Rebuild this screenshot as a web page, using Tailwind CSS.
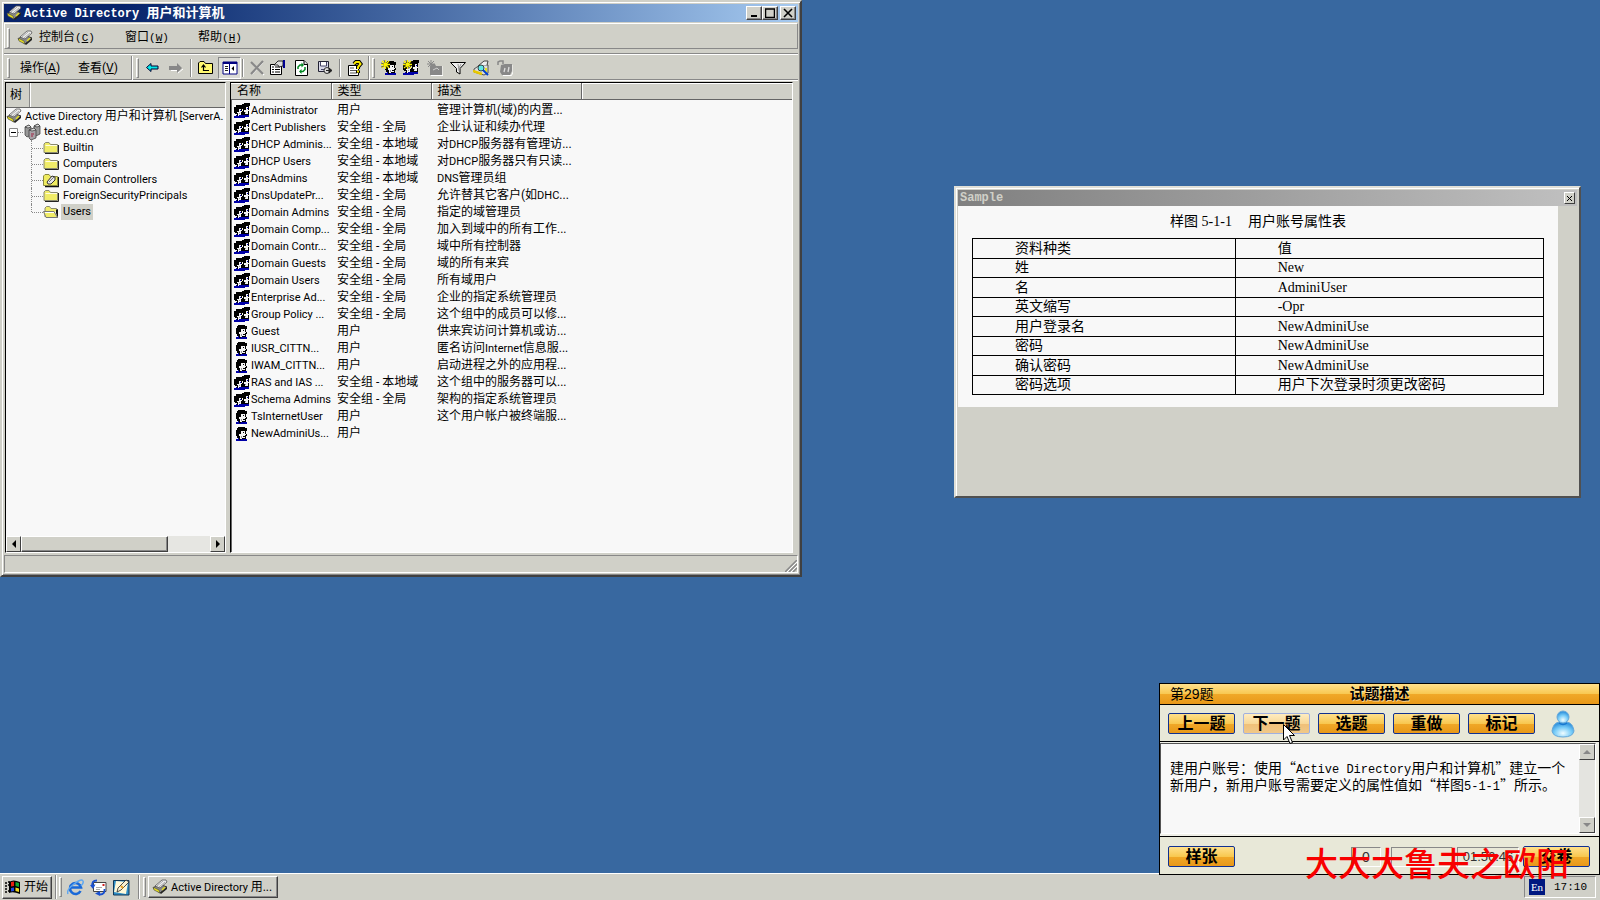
<!DOCTYPE html>
<html lang="zh-CN">
<head>
<meta charset="utf-8">
<title>Active Directory 用户和计算机</title>
<script src="https://cdn.jsdelivr.net/npm/@tailwindcss/browser@4"></script>
</head>
<body class="relative min-h-screen overflow-hidden bg-[#3868a0] font-['Roboto','Noto_Sans_CJK_SC',sans-serif] text-xs text-black">

<svg class="hidden" aria-hidden="true">
  <symbol id="mmc" viewBox="0 0 16 16">
    <path d="M1 9 7 5 15 8 8 14Z" fill="#888" stroke="#333"/><path d="M1 8 7 11 8 14 2 11Z" fill="#e8e020" stroke="#444" stroke-width=".6"/>
    <path d="M8 14 15 8V10L9 15Z" fill="#222"/><path d="M3 7 10 1 14 1 15 3 8 9Z" fill="#eee" stroke="#555" stroke-width=".8"/><path d="M5 7 11 2M7 8 13 3" stroke="#999" stroke-width=".8"/><path d="M10 11 13 8" stroke="#e8e020" stroke-width="1.5"/>
  </symbol>
  <symbol id="user" viewBox="0 0 16 16">
    <g shape-rendering="crispEdges">
    <path d="M2 15V13H4V12H12V13H13V15Z" fill="#0000a8"/>
    <path d="M4 1H11V2H13V5H12V8H13V10H12V13H7V14H5V12H3V10H2V4H3V2H4Z"/>
    <path d="M7 5H11V8H12V9H11V12H8V13H6V10H5V8H7Z" fill="#f4f4f4"/>
    <path d="M9 6h1v1h-1ZM9 10h2v1h-2Z"/><path d="M7 10h1v2h-1Z" fill="#999"/>
    </g>
  </symbol>
  <symbol id="group" viewBox="0 0 16 16">
    <g shape-rendering="crispEdges">
    <path d="M0 15V13H2V12H15V14H11V15Z" fill="#0000a8"/>
    <path d="M8 1H10V0H16V3H15V12H9V3H8Z"/>
    <path d="M12 4H14V7H15V8H14V11H11V9H10V7H12Z" fill="#f4f4f4"/>
    <path d="M2 2H8V3H9V6H8V8H9V12H5V13H3V11H1V10H0V4H2Z"/>
    <path d="M5 6H7V8H8V9H7V12H5V13H4V10H3V9H5Z" fill="#f4f4f4"/>
    <path d="M6 7h1v1H6ZM13 5h1v1h-1Z" fill="#0000c0"/><path d="M11 9h1v1h-1ZM5 10h1v1H5Z" fill="#999"/>
    </g>
  </symbol>
  <symbol id="folder" viewBox="0 0 16 16">
    <path d="M2 13.500H15.500V5" stroke="#222" fill="none"/><path d="M1 12.500V4L2.500 2.500H6L7.500 4.500H14.500V12.500Z" fill="#f0ec68" stroke="#8a8a70"/><path d="M2.500 5.500H14" stroke="#fffde0"/>
  </symbol>
  <symbol id="folderopen" viewBox="0 0 16 16">
    <path d="M2 13V4L3.500 2.500H6.500L8 4.500H13.500V7" fill="#f0ec68" stroke="#8a8a70"/><path d="M3 13.500 0.500 7.500H11L14.500 13.500Z" fill="#f0ec68" stroke="#777"/><path d="M13 6V9L15 14V5Z" fill="#111"/><path d="M2 8.500h9" stroke="#fff"/>
  </symbol>
  <symbol id="ou" viewBox="0 0 16 16">
    <path d="M2 14.500H15.500V5" stroke="#111" stroke-width="1.500" fill="none"/><path d="M.5 13.500V4L2 2.500H6L7.500 4.500H14.500V13.500Z" fill="#f0ec60" stroke="#8a8a40"/><path d="M4 10 9 4 12 5 12 8 8 12 5 12Z" fill="#e8e8e8" stroke="#333"/><path d="M6 10 11 5" stroke="#777"/>
  </symbol>
  <symbol id="domain" viewBox="0 0 18 18">
    <g stroke="#333" stroke-width=".7"><path d="M2 4 6 2 8 4V12L4 14 2 12Z" fill="#999"/><path d="M11 3 15 1 17 3V11L13 13 11 11Z" fill="#999"/><path d="M6 7 11 5 13 7V15L8 17 6 15Z" fill="#a8a4a8"/><path d="M2 4 6 2 8 4 5 5ZM11 3 15 1 17 3 14 4ZM6 7 11 5 13 7 9 8Z" fill="#ddd"/></g><path d="M8 11h3M8 13h2" stroke="#a02040"/>
  </symbol>
  <symbol id="spark" viewBox="0 0 16 16"><path d="M4.500 0V9M0 4.500H9M1 1 8 8M8 1 1 8" stroke="#f8f000" stroke-width="1.300"/><path d="M3 0 4 3M0 3 3 4M0 7 3 6M6 9 5 6" stroke="#222" stroke-width=".6"/></symbol>
</svg>

<main>
<!-- Directory console window -->
<section class="absolute left-0 top-0 flex h-[577px] w-[802px] flex-col border-2 border-t-[#d0d0c8] border-l-[#d0d0c8] border-r-[#404040] border-b-[#404040] bg-[#d0d0c8] p-0.5 shadow-[inset_1px_1px_0_#fff,inset_-1px_-1px_0_#888]">
  <header class="flex h-[18px] shrink-0 items-center bg-gradient-to-r from-[#08246b] from-15% to-[#a6caf0] pl-0.5 pr-0.5 text-white">
    <svg class="size-4"><use href="#mmc"/></svg>
    <h1 class="ml-0.5 flex-1 whitespace-pre pt-0.5 font-['Liberation_Mono','Noto_Sans_CJK_SC',monospace] text-xs font-bold">Active Directory <span class="text-[13px]">用户和计算机</span></h1>
    <button aria-label="最小化" class="flex h-3.5 w-4 items-center justify-center border border-t-white border-l-white border-r-[#404040] border-b-[#404040] bg-[#d0d0c8] shadow-[inset_-1px_-1px_0_#888]"><svg class="size-2.5" viewBox="0 0 10 10"><path d="M2 8H8" stroke="#000" stroke-width="2"/></svg></button>
    <button aria-label="最大化" class="flex h-3.5 w-4 items-center justify-center border border-t-white border-l-white border-r-[#404040] border-b-[#404040] bg-[#d0d0c8] shadow-[inset_-1px_-1px_0_#888]"><svg class="size-2.5" viewBox="0 0 10 10"><path d="M.5 1V9.500H9.500V1M0 1H10" stroke="#000" stroke-width="1.500" fill="none"/></svg></button>
    <button aria-label="关闭" class="ml-0.5 flex h-3.5 w-4 items-center justify-center border border-t-white border-l-white border-r-[#404040] border-b-[#404040] bg-[#d0d0c8] shadow-[inset_-1px_-1px_0_#888]"><svg class="size-2.5" viewBox="0 0 10 10"><path d="M1 1 9 9M9 1 1 9" stroke="#000" stroke-width="1.600"/></svg></button>
  </header>

  <nav class="mt-px flex h-[26px] shrink-0 items-center border border-t-white border-l-white border-r-[#888] border-b-[#888] pl-0.5 pt-[3px] font-['Liberation_Mono','Noto_Sans_CJK_SC',monospace]">
    <span class="h-5 w-[3px] border border-t-white border-l-white border-r-[#888] border-b-[#888]"></span>
    <svg class="ml-[7px] size-4"><use href="#mmc"/></svg>
    <button class="ml-1.5 w-[86px] text-left">控制台<span class="text-[11px]">(<u>C</u>)</span></button>
    <button class="w-[73px] text-left">窗口<span class="text-[11px]">(<u>W</u>)</span></button>
    <button class="text-left">帮助<span class="text-[11px]">(<u>H</u>)</span></button>
  </nav>

  <div class="mt-1 flex h-[27px] shrink-0 items-center border-t border-b border-t-[#888] border-b-[#888] pl-[3px] pt-[3px] shadow-[inset_0_1px_0_#fff,0_1px_0_#fff]">
    <span class="h-5 w-[3px] border border-t-white border-l-white border-r-[#888] border-b-[#888]"></span>
    <button class="ml-2.5 w-[58px] text-left">操作(<u>A</u>)</button>
    <button class="w-[53px] text-left">查看(<u>V</u>)</button>
    <span class="h-6 w-0.5 border-l border-r border-l-[#888] border-r-white"></span>
    <span class="ml-[3px] h-5 w-[3px] border border-t-white border-l-white border-r-[#888] border-b-[#888]"></span>
    <button aria-label="后退" class="ml-1.5"><svg class="size-4" viewBox="0 0 16 16"><path d="M1.500 7.500 6 3.500V6H13V9H6V11.500Z" fill="#00e8e8" stroke="#003"/></svg></button>
    <button aria-label="前进" class="ml-[7px]"><svg class="size-4" viewBox="0 0 16 16"><path d="M15 9 10 13V10.500H3" stroke="#fff" fill="none"/><path d="M14 8 9 3V6H1V10H9V13Z" fill="#888"/></svg></button>
    <span class="ml-1.5 h-[18px] w-0.5 border-l border-r border-l-[#888] border-r-white"></span>
    <button aria-label="上一级" class="ml-1.5"><svg class="size-4" viewBox="0 0 16 16"><path d="M.5 13.500V3L2 1.500H6L7.500 3.500H14.500V13.500Z" fill="#fff870" stroke="#000"/><path d="M5.500 5V10.500H11M3.500 7.500 5.500 5 7.500 7.500" stroke="#000" fill="none" stroke-width="1.200"/></svg></button>
    <button aria-label="显示树" aria-pressed="true" class="ml-1 flex h-[22px] w-[23px] items-center justify-center border border-t-[#888] border-l-[#888] border-r-white border-b-white bg-[#dcdcd6]"><svg class="size-4" viewBox="0 0 16 16"><path d="M1 2H15V14H1Z" fill="#fff" stroke="#000080"/><path d="M1 3H15" stroke="#000080" stroke-width="2"/><path d="M7.500 3V14" stroke="#000080"/><path d="M3 6.500h3M3 8.500h3M3 10.500h3" stroke="#222"/><path d="M12 6V11L9.500 8.500Z"/></svg></button>
    <span class="ml-px h-[18px] w-0.5 border-l border-r border-l-[#888] border-r-white"></span>
    <button aria-label="删除" class="ml-[5px]"><svg class="size-4" viewBox="0 0 16 16"><path d="M3 3 15 15M14 2 3 14" stroke="#fff" stroke-width="1.500"/><path d="M2 2 14 14M14 1 2 14" stroke="#888" stroke-width="2.200"/></svg></button>
    <button aria-label="属性" class="ml-[5px]"><svg class="size-4" viewBox="0 0 16 16"><path d="M.5 4.500H11.500V14.500H.5Z" fill="#fff" stroke="#000"/><path d="M2 7h2M5 7h5M2 9.500h2M5 9.500h5M2 12h2M5 12h5" stroke="#000"/><path d="M4 5 8 1H13V6L9 7 8 5Z" fill="#ddd" stroke="#000" stroke-width=".8"/><path d="M13 0h2v8h-2Z" fill="#000090"/></svg></button>
    <button aria-label="刷新" class="ml-2"><svg class="size-4" viewBox="0 0 16 16"><path d="M1.500 .5H10L13.500 4V15.500H1.500Z" fill="#fff" stroke="#000"/><path d="M10 .5V4.500H13.500" fill="#ddd" stroke="#000"/><path d="M4 9V7L6 5H8M11 7V9.500L9 11.500H7" fill="none" stroke="#008820" stroke-width="1.500"/><path d="M7.500 2.500V7.500L10 5ZM7.500 9V14L5 11.500Z" fill="#008820"/></svg></button>
    <button aria-label="导出列表" class="ml-[7px]"><svg class="size-4" viewBox="0 0 16 16"><path d="M1.500 1.500H11.500V11.500H1.500Z" fill="#d8d8e8" stroke="#223"/><path d="M3.500 2V6H9.500V2M4 9.500H8" stroke="#446" fill="#fff"/><circle cx="10" cy="10.500" r="3" fill="#ddd" stroke="#333"/><path d="M9 10.500H13M12 8 15 10.500 12 13Z" fill="#222" stroke="#222"/></svg></button>
    <span class="ml-1.5 h-[18px] w-0.5 border-l border-r border-l-[#888] border-r-white"></span>
    <button aria-label="帮助" class="ml-[7px]"><svg class="size-4" viewBox="0 0 16 16"><path d="M.5 5.500H10.500V15.500H.5Z" fill="#fff" stroke="#000"/><path d="M2 8h4M2 10.500h7M2 13h7" stroke="#555"/><path d="M6 4 8 2H11L12.500 4 10 7V9M10 10.500V13" fill="none" stroke="#000" stroke-width="4"/><path d="M6 4 8 2H11L12.500 4 10 7V9M10 10.500V12.500" fill="none" stroke="#f8e800" stroke-width="2"/></svg></button>
    <span class="ml-1 h-6 w-0.5 border-l border-r border-l-[#888] border-r-white"></span>
    <span class="ml-0.5 h-5 w-[3px] border border-t-white border-l-white border-r-[#888] border-b-[#888]"></span>
    <button aria-label="新建用户" class="ml-1.5"><svg class="size-4" viewBox="0 0 16 16"><use href="#user" x="2" width="16" height="16"/><use href="#spark"/></svg></button>
    <button aria-label="新建组" class="ml-1.5"><svg class="size-4" viewBox="0 0 16 16"><use href="#group"/><use href="#spark"/></svg></button>
    <button aria-label="新建组织单位" class="ml-2"><svg class="size-4" viewBox="0 0 16 16"><path d="M4 15.500H16V6" stroke="#fff" fill="none"/><path d="M3 15V6L5 4H8L9 6H15V15Z" fill="#888"/><path d="M4 0V8M0 4H8M1 1 7 7M7 1 1 7" stroke="#888"/><path d="M6 10 10 8 12 10" stroke="#ccc" fill="none"/></svg></button>
    <button aria-label="筛选" class="ml-[7px]"><svg class="size-4" viewBox="0 0 16 16"><path d="M.5 2.500H15.500L10 8.500V14L6.500 12V8.500Z" fill="#eee" stroke="#000"/><path d="M8 4 9 11M11 4 9 8" stroke="#999"/></svg></button>
    <button aria-label="查找" class="ml-[7px]"><svg class="size-4" viewBox="0 0 16 16"><path d="M1 9 7 5H15V13L11 15 1 12Z" fill="#ddd" stroke="#333" stroke-width=".8"/><path d="M0 11 9 14" stroke="#e8c800" stroke-width="2.500"/><path d="M5 6 11 1H15L14 5" fill="#eee" stroke="#444"/><path d="M13 8V12" stroke="#e8e020" stroke-width="2"/><circle cx="8" cy="8" r="3" fill="#60e8e8" stroke="#222" stroke-width=".8"/><path d="M10 10 15 15" stroke="#0040d0" stroke-width="2"/></svg></button>
    <button aria-label="添加到组" class="ml-2"><svg class="size-4" viewBox="0 0 16 16"><path d="M6 15.500H14.500L16 12V5" stroke="#fff" fill="none"/><path d="M1 5V2L3 1H6V4" stroke="#888" stroke-width="1.500" fill="none"/><path d="M4 5 8 4H15V11L13 15H5L3 12Z" fill="#888"/><path d="M8 8 7 12M12 7 11 12" stroke="#ddd" stroke-width="1.300"/></svg></button>
  </div>

  <div class="mt-0.5 flex min-h-0 flex-1 gap-1 pl-px pr-[5px]">
    <!-- Console tree -->
    <div class="flex w-[221px] flex-col border border-t-black border-l-black border-r-white border-b-white bg-[#f8f8f8]">
      <div class="flex h-[25px] shrink-0 border-b border-b-[#666] bg-[#d0d0c8]"><span class="flex w-6 items-center border-r border-r-[#888] pl-1 shadow-[1px_0_0_#fff]">树</span></div>
      <ul class="flex-1 whitespace-nowrap text-[11px] leading-4">
        <li>
          <div class="flex h-4 items-center gap-[3px]"><svg class="size-4 shrink-0"><use href="#mmc"/></svg><span>Active Directory <span class="text-xs">用户和计算机</span> [ServerA.</span></div>
          <ul>
            <li>
              <div class="flex h-4 items-center pl-[3px]"><button aria-label="折叠" class="shrink-0"><svg class="block size-[9px]" viewBox="0 0 9 9"><path d="M.5 .5H8.500V8.500H.5Z" fill="#fff" stroke="#888"/><path d="M2 4.500H7" stroke="#000"/></svg></button><span class="w-[5px] border-t border-dotted border-[#888]"></span><svg class="size-[18px] shrink-0"><use href="#domain"/></svg><span class="ml-[3px]">test.edu.cn</span></div>
              <ul id="containers" class="ml-[25px]"></ul>
            </li>
          </ul>
        </li>
      </ul>
      <div class="flex h-4 shrink-0 bg-[#e6e6e2]">
        <button aria-label="向左滚动" class="flex w-[15px] items-center justify-center border border-t-white border-l-white border-r-[#404040] border-b-[#404040] bg-[#d0d0c8]"><svg class="size-2" viewBox="0 0 8 8"><path d="M6 0V8L2 4Z"/></svg></button>
        <span class="w-[147px] border border-t-white border-l-white border-r-[#404040] border-b-[#404040] bg-[#d0d0c8] shadow-[inset_-1px_-1px_0_#888]"></span>
        <button aria-label="向右滚动" class="ml-auto flex w-[15px] items-center justify-center border border-t-white border-l-white border-r-[#404040] border-b-[#404040] bg-[#d0d0c8]"><svg class="size-2" viewBox="0 0 8 8"><path d="M2 0V8L6 4Z"/></svg></button>
      </div>
    </div>
    <!-- Object list -->
    <div class="min-w-0 flex-1 border border-t-black border-l-black border-r-white border-b-white bg-[#f8f8f8] shadow-[inset_1px_0_0_#666]">
      <table class="w-full table-fixed border-collapse text-left">
        <thead class="h-4 leading-4">
          <tr class="h-4">
            <th class="w-[100px] border-b border-r border-[#666] bg-[#d0d0c8] p-0 pl-1.5 font-normal shadow-[inset_0_1px_0_#fff]">名称</th>
            <th class="w-[100px] border-b border-r border-[#666] bg-[#d0d0c8] p-0 pl-1.5 font-normal shadow-[inset_1px_1px_0_#fff]">类型</th>
            <th class="w-[150px] border-b border-r border-[#666] bg-[#d0d0c8] p-0 pl-1.5 font-normal shadow-[inset_1px_1px_0_#fff]">描述</th>
            <th class="border-b border-[#666] bg-[#d0d0c8] p-0 shadow-[inset_1px_1px_0_#fff]"></th>
          </tr>
        </thead>
        <tbody id="objects" class="leading-[17px] before:block before:h-0.5"></tbody>
      </table>
    </div>
  </div>

  <footer class="mt-0.5 flex h-[18px] shrink-0 items-end justify-end border border-t-[#888] border-l-[#888] border-r-white border-b-white">
    <svg class="size-3" viewBox="0 0 12 12"><path d="M0 12 12 0M4 12 12 4M8 12 12 8" stroke="#888" stroke-width="1.500"/><path d="M2 12 12 2M6 12 12 6" stroke="#fff"/></svg>
  </footer>
</section>

<!-- Sample window -->
<section class="absolute left-[954px] top-[186px] h-[312px] w-[627px] border-2 border-t-[#e0e0d8] border-l-[#e0e0d8] border-r-[#505050] border-b-[#505050] bg-[#d0d0c8] p-0.5 shadow-[inset_1px_1px_0_#fff]">
  <header class="flex h-4 items-center justify-between bg-gradient-to-r from-[#808080] to-[#c0c0c0] pr-0.5">
    <h2 class="pl-0.5 font-['Liberation_Mono',monospace] text-xs font-bold text-[#d0d0c8]">Sample</h2>
    <button aria-label="关闭" class="flex h-3 w-[11px] items-center justify-center border border-t-white border-l-white border-r-[#404040] border-b-[#404040] bg-[#d0d0c8]"><svg class="size-[7px]" viewBox="0 0 7 7"><path d="M1 1 6 6M6 1 1 6" stroke="#000"/></svg></button>
  </header>
  <div class="mr-[19px] bg-[#f8f8f8] px-3.5 pb-3 font-['Liberation_Serif','Noto_Sans_CJK_SC',serif] text-sm">
    <table class="w-full table-fixed border-collapse">
      <caption class="h-8 text-center leading-8">样图 5-1-1<span class="ml-4">用户账号属性表</span></caption>
      <thead><tr class="leading-[19px]"><th class="w-[46%] border border-black p-0 pl-[42px] text-left font-normal">资料种类</th><th class="border border-black p-0 pl-[42px] text-left font-normal">值</th></tr></thead>
      <tbody id="attributes"></tbody>
    </table>
  </div>
</section>

<!-- Question panel -->
<section class="absolute bottom-[25px] right-0 z-10 flex h-[192px] w-[441px] flex-col border border-black bg-[#e8e8d8] font-['Liberation_Sans','Noto_Sans_CJK_SC',sans-serif] text-sm">
  <header class="relative flex h-[21px] shrink-0 items-center justify-center border-b border-black bg-[linear-gradient(#ffe08c_0%,#f8c850_50%,#f0a828_52%,#e89818_100%)] leading-5">
    <span class="absolute left-2.5">第29题</span>
    <h2 class="text-[15px] font-bold [text-shadow:1px_1px_0_#fff8]">试题描述</h2>
  </header>
  <div class="flex h-[37px] shrink-0 items-center gap-2 border-b border-black pl-2 pt-px text-base font-bold">
    <button class="h-[21px] w-[67px] rounded-xs border border-[#103090] bg-[linear-gradient(#ffe08c_0%,#f8c850_50%,#f0a828_52%,#e89818_100%)] leading-[18px]">上一题</button>
    <button class="h-[21px] w-[67px] rounded-xs border border-[#a0b0e0] bg-[linear-gradient(#ffecc0_0%,#f8d898_50%,#f0c078_52%,#f0c888_100%)] leading-[18px]">下一题</button>
    <button class="h-[21px] w-[67px] rounded-xs border border-[#103090] bg-[linear-gradient(#ffe08c_0%,#f8c850_50%,#f0a828_52%,#e89818_100%)] leading-[18px]">选题</button>
    <button class="h-[21px] w-[67px] rounded-xs border border-[#103090] bg-[linear-gradient(#ffe08c_0%,#f8c850_50%,#f0a828_52%,#e89818_100%)] leading-[18px]">重做</button>
    <button class="h-[21px] w-[67px] rounded-xs border border-[#103090] bg-[linear-gradient(#ffe08c_0%,#f8c850_50%,#f0a828_52%,#e89818_100%)] leading-[18px]">标记</button>
    <svg class="ml-2 h-7 w-6" viewBox="0 0 24 28"><defs><radialGradient id="glass" cx=".5" cy=".75" r=".65"><stop offset="0" stop-color="#f0fcff"/><stop offset=".6" stop-color="#78ccf8"/><stop offset="1" stop-color="#3898e0"/></radialGradient></defs><path d="M1 21Q2 13 8 12H16Q22 13 23 21Q22 27 12 27Q2 27 1 21Z" fill="url(#glass)" stroke="#68a8d8"/><circle cx="12" cy="7" r="6" fill="url(#glass)" stroke="#68a8d8"/><path d="M8 13Q12 16 16 13" stroke="#1878d0" fill="none" stroke-width="1.500"/></svg>
  </div>
  <div class="flex min-h-0 flex-1 border-b border-black bg-[#f0f0e8] pb-0.5 pt-px pr-[3px]">
    <div class="flex flex-1 border border-t-[#555] border-l-[#555] border-r-white border-b-white bg-[#f8f8f8]">
      <p class="flex-1 whitespace-nowrap pl-[9px] pt-[15px] font-['Noto_Sans_CJK_SC',sans-serif] leading-4">建用户账号：使用“<span class="font-['Liberation_Mono',monospace] text-xs leading-none">Active Directory</span>用户和计算机”建立一个<br>新用户，新用户账号需要定义的属性值如“样图<span class="font-['Liberation_Mono',monospace] text-xs leading-none">5-1-1</span>”所示。</p>
      <div class="flex w-4 flex-col justify-between bg-[#e4e4e0]">
        <button aria-label="向上滚动" class="flex h-4 items-center justify-center border border-t-white border-l-white border-r-[#404040] border-b-[#404040] bg-[#d0d0c8]"><svg class="size-2" viewBox="0 0 8 8"><path d="M0 6H8L4 2Z" fill="#888"/></svg></button>
        <button aria-label="向下滚动" class="flex h-4 items-center justify-center border border-t-white border-l-white border-r-[#404040] border-b-[#404040] bg-[#d0d0c8]"><svg class="size-2" viewBox="0 0 8 8"><path d="M0 2H8L4 6Z" fill="#888"/></svg></button>
      </div>
    </div>
  </div>
  <div class="flex h-[37px] shrink-0 items-center pl-2 pr-[9px] pt-0.5">
    <button class="h-[21px] w-[67px] rounded-xs border border-[#103090] bg-[linear-gradient(#ffe08c_0%,#f8c850_50%,#f0a828_52%,#e89818_100%)] text-base font-bold leading-[18px]">样张</button>
    <span class="ml-auto h-5 w-[30px] border border-t-[#888] border-l-[#888] border-r-white border-b-white text-center leading-[18px] text-[#333]">0</span>
    <span class="ml-2.5 h-5 w-[62px] border border-t-[#888] border-l-[#888] border-r-white border-b-white"></span>
    <span class="ml-1 mr-1 h-5 w-[62px] border border-t-[#888] border-l-[#888] border-r-white border-b-white text-center text-[13px] leading-[18px] text-[#333]">01:56:46</span>
    <button class="h-[21px] w-[67px] rounded-xs border border-[#103090] bg-[linear-gradient(#ffe08c_0%,#f8c850_50%,#f0a828_52%,#e89818_100%)] text-base font-bold leading-[18px]">交卷</button>
  </div>
</section>
</main>

<p class="absolute bottom-[22px] right-[31px] z-20 font-['Noto_Sans_CJK_SC',serif] text-[33px] font-medium leading-8 text-[#f80000]">大大大鲁夫之欧阳</p>
<svg class="absolute left-[1283px] top-[724px] z-20 h-5 w-3" viewBox="0 0 12 20"><path d="M.5 .5V16L4 12.500 7 19.500 9.500 18.500 6.500 11.500H11.500Z" fill="#fff" stroke="#000"/></svg>

<!-- Taskbar -->
<footer class="absolute inset-x-0 bottom-0 flex h-[27px] items-center border-t border-white bg-[#d0d0c8] pl-0.5 pr-1">
  <button class="flex h-[23px] w-[50px] items-center border border-t-white border-l-white border-r-[#404040] border-b-[#404040] pl-0.5 shadow-[inset_-1px_-1px_0_#888]"><svg class="size-4" viewBox="0 0 16 16"><path d="M0 4h2M0 7h2M0 10h2M0 13h2M3 3h2M3 6h2M3 12h2" stroke="#000" stroke-width="1.500"/><path d="M4 3Q8 0 15 3V15Q8 12 4 14Z"/><path d="M6 3 9 2.500V7L6 7.500Z" fill="#e82010"/><path d="M10.500 3 14 4V8L10.500 7Z" fill="#10a830"/><path d="M6 9 9 8.500V12L6 12.500Z" fill="#2048e0"/><path d="M10.500 8.500 14 9.500V13L10.500 12Z" fill="#f0d820"/></svg><span class="ml-[3px] text-xs">开始</span></button>
  <span class="ml-[3px] h-6 w-0.5 border-l border-r border-l-[#888] border-r-white"></span>
  <span class="ml-0.5 h-5 w-[3px] border border-t-white border-l-white border-r-[#888] border-b-[#888]"></span>
  <a href="#ie" aria-label="Internet Explorer" class="ml-[5px]"><svg class="size-[17px]" viewBox="0 0 17 17"><path d="M13.500 12A5.500 5.500 0 1 1 14 8.500H4" fill="none" stroke="#1868d8" stroke-width="2.600"/><path d="M1 15Q-1 11 7 5T16 2Q17 4 14 7" fill="none" stroke="#60a8f0" stroke-width="1.500"/></svg></a>
  <a href="#mail" aria-label="Outlook Express" class="ml-1.5"><svg class="size-[17px]" viewBox="0 0 17 17"><path d="M3.500 3.500H16V12.500H3.500Z" fill="#fff" stroke="#444"/><path d="M12.500 5h2v2h-2Z" fill="#d02020"/><path d="M6 8.500H12M6 10.500H10" stroke="#aaa"/><path d="M7 1.500Q1 1.500 2.500 8M10 15.500Q15 15.500 14.500 10" fill="none" stroke="#1850d0" stroke-width="1.800"/><path d="M0 6 3 10 5.500 5.500ZM10 12V17L5 14.500Z" fill="#1850d0"/></svg></a>
  <a href="#desktop" aria-label="显示桌面" class="ml-1.5"><svg class="size-[17px]" viewBox="0 0 17 17"><path d="M.5 1.500H16V16H.5Z" fill="#3090c8" stroke="#103858"/><path d="M3 2 15 3 13 15 1 13Z" fill="#fff8d8"/><path d="M4 13 5 9 13 1 16 3 8 11Z" fill="#f8f0d0" stroke="#222" stroke-width=".8"/><path d="M8 7 10 9" stroke="#e8a020" stroke-width="2"/></svg></a>
  <span class="ml-2 h-6 w-0.5 border-l border-r border-l-[#888] border-r-white"></span>
  <span class="ml-[3px] h-5 w-[3px] border border-t-white border-l-white border-r-[#888] border-b-[#888]"></span>
  <button class="ml-0.5 flex h-[22px] w-[130px] items-center gap-[3px] border border-t-white border-l-white border-r-[#404040] border-b-[#404040] pl-[3px] text-[11px] whitespace-nowrap shadow-[inset_-1px_-1px_0_#888]"><svg class="size-4 shrink-0"><use href="#mmc"/></svg><span>Active Directory <span class="text-xs">用...</span></span></button>
  <div class="ml-auto flex h-[22px] w-[72px] items-center border border-t-[#888] border-l-[#888] border-r-white border-b-white pl-1 pr-2">
    <span class="flex size-4 items-center justify-center bg-[#001880] font-['Liberation_Serif',serif] text-[11px] text-white">En</span>
    <time class="ml-auto font-['Liberation_Mono',monospace] text-[11px]">17:10</time>
  </div>
</footer>

<script>
  const containers = [["folder","Builtin"],["folder","Computers"],["ou","Domain Controllers"],["folder","ForeignSecurityPrincipals"],["folderopen","Users"]];
  document.getElementById("containers").innerHTML = containers.map(([icon, name], i) =>
    `<li class="flex h-4 items-center"><span class="self-start border-l border-dotted border-[#888] ${i === containers.length - 1 ? "h-2" : "h-4"}"></span><span class="w-[11px] border-t border-dotted border-[#888]"></span><svg class="size-4 shrink-0"><use href="#${icon}"/></svg><span class="ml-0.5 px-0.5 ${name === "Users" ? "bg-[#d0d0c8]" : ""}">${name}</span></li>`).join("");

  const G = "安全组 - 全局", L = "安全组 - 本地域", U = "用户";
  const objects = [
    ["group","Administrator",U,"管理计算机(域)的内置..."],["group","Cert Publishers",G,"企业认证和续办代理"],
    ["group","DHCP Adminis...",L,"对DHCP服务器有管理访..."],["group","DHCP Users",L,"对DHCP服务器只有只读..."],
    ["group","DnsAdmins",L,"DNS管理员组"],["group","DnsUpdatePr...",G,"允许替其它客户(如DHC..."],
    ["group","Domain Admins",G,"指定的域管理员"],["group","Domain Comp...",G,"加入到域中的所有工作..."],
    ["group","Domain Contr...",G,"域中所有控制器"],["group","Domain Guests",G,"域的所有来宾"],
    ["group","Domain Users",G,"所有域用户"],["group","Enterprise Ad...",G,"企业的指定系统管理员"],
    ["group","Group Policy ...",G,"这个组中的成员可以修..."],["user","Guest",U,"供来宾访问计算机或访..."],
    ["user","IUSR_CITTN...",U,"匿名访问Internet信息服..."],["user","IWAM_CITTN...",U,"启动进程之外的应用程..."],
    ["group","RAS and IAS ...",L,"这个组中的服务器可以..."],["group","Schema Admins",G,"架构的指定系统管理员"],
    ["user","TsInternetUser",U,"这个用户帐户被终端服..."],["user","NewAdminiUs...",U,""]
  ];
  const latin = s => s.replace(/[A-Za-z]+/g, m => `<span class="text-[11px]">${m}</span>`);
  document.getElementById("objects").innerHTML = objects.map(([icon, name, type, text]) =>
    `<tr class="h-[17px] whitespace-nowrap"><td class="p-0 pl-[3px]"><span class="flex h-[17px] items-center text-[11px]"><svg class="mr-px size-4 shrink-0"><use href="#${icon}"/></svg>${name}</span></td><td class="p-0 pl-1.5">${type}</td><td class="p-0 pl-1.5">${latin(text)}</td><td></td></tr>`).join("");

  const attributes = [["姓","New"],["名","AdminiUser"],["英文缩写","-Opr"],["用户登录名","NewAdminiUse"],["密码","NewAdminiUse"],["确认密码","NewAdminiUse"],["密码选项","用户下次登录时须更改密码"]];
  document.getElementById("attributes").innerHTML = attributes.map(([k, v], i) =>
    `<tr class="${i % 2 ? "leading-[19px]" : "leading-[18px]"}"><td class="border border-black p-0 pl-[42px]">${k}</td><td class="border border-black p-0 pl-[42px]">${v}</td></tr>`).join("");
</script>
</body>
</html>
